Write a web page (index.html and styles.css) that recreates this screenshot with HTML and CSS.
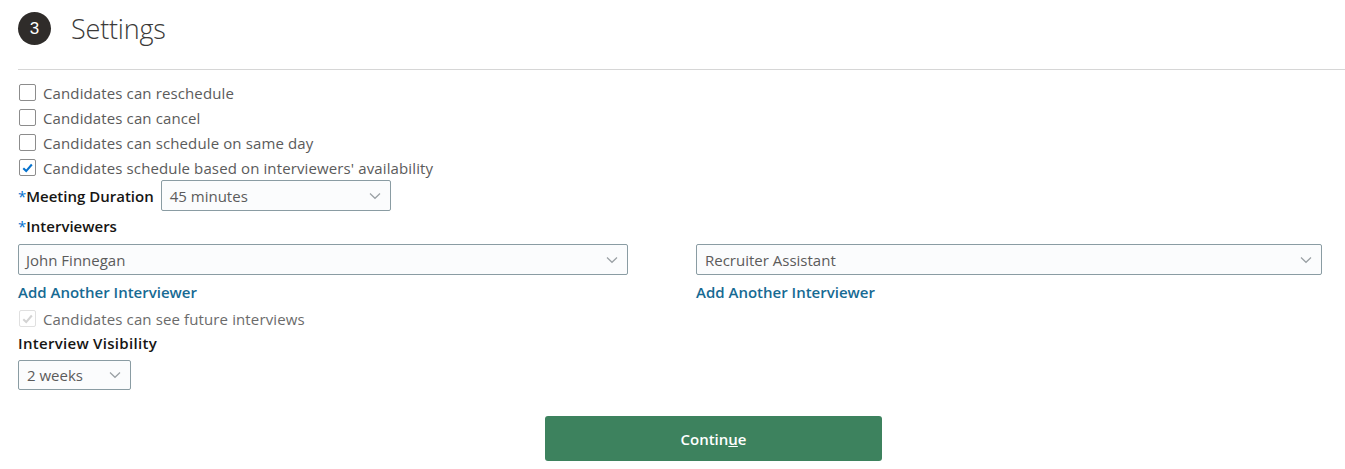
FILE: index.html
```html
<!DOCTYPE html>
<html>
<head>
<meta charset="utf-8">
<link rel="stylesheet" href="styles.css">
</head>
<body>
<div class="header">
  <span class="step">3</span>
  <h1 class="title">Settings</h1>
</div>
<div class="form">
  <div class="checks">
    <label class="check"><span class="box"></span><span class="check-text">Candidates can reschedule</span></label>
    <label class="check"><span class="box"></span><span class="check-text">Candidates can cancel</span></label>
    <label class="check"><span class="box"></span><span class="check-text">Candidates can schedule on same day</span></label>
    <label class="check"><span class="box checked"><svg viewBox="0 0 16 16" width="16" height="16"><path d="M3.5 8.3 L6.6 11.3 L12.6 4.3" fill="none" stroke="#0572ce" stroke-width="2.2"/></svg></span><span class="check-text">Candidates schedule based on interviewers' availability</span></label>
  </div>
  <div class="duration-row">
    <span class="label"><span class="req">*</span>Meeting Duration</span>
    <div class="select select-duration"><span>45 minutes</span><svg class="chev" viewBox="0 0 12 8" width="12" height="8"><path d="M1 1.5 L6 6.3 L11 1.5" fill="none" stroke="#9aa0a4" stroke-width="1.2"/></svg></div>
  </div>
  <div class="label block-label"><span class="req">*</span>Interviewers</div>
  <div class="interviewers">
    <div class="interviewer">
      <div class="select select-wide"><span>John Finnegan</span><svg class="chev" viewBox="0 0 12 8" width="12" height="8"><path d="M1 1.5 L6 6.3 L11 1.5" fill="none" stroke="#9aa0a4" stroke-width="1.2"/></svg></div>
      <a class="link">Add Another Interviewer</a>
    </div>
    <div class="interviewer">
      <div class="select select-wide"><span>Recruiter Assistant</span><svg class="chev" viewBox="0 0 12 8" width="12" height="8"><path d="M1 1.5 L6 6.3 L11 1.5" fill="none" stroke="#9aa0a4" stroke-width="1.2"/></svg></div>
      <a class="link">Add Another Interviewer</a>
    </div>
  </div>
  <label class="check disabled"><span class="box checked"><svg viewBox="0 0 16 16" width="16" height="16"><path d="M3.5 8.3 L6.6 11.3 L12.6 4.3" fill="none" stroke="#d3d3d3" stroke-width="2.2"/></svg></span><span class="check-text">Candidates can see future interviews</span></label>
  <div class="label block-label vis-label">Interview Visibility</div>
  <div class="select select-small"><span>2 weeks</span><svg class="chev" viewBox="0 0 12 8" width="12" height="8"><path d="M1 1.5 L6 6.3 L11 1.5" fill="none" stroke="#9aa0a4" stroke-width="1.2"/></svg></div>
  <div class="actions">
    <button class="continue">Contin<u>u</u>e</button>
  </div>
</div>
</body>
</html>
```

FILE: styles.css
```css
* { box-sizing: border-box; }
body {
  margin: 0;
  background: #fff;
  font-family: "Open Sans", "Noto Sans", sans-serif;
  color: #161513;
}
.header {
  display: flex;
  align-items: center;
  height: 70px;
  margin-left: 18px;
  padding-bottom: 12px;
  border-bottom: 1px solid #d6d6d6;
}
.step {
  width: 33px;
  height: 33px;
  border-radius: 50%;
  background: #2f2c2a;
  color: #fff;
  font-family: "Liberation Sans", sans-serif;
  font-size: 17px;
  display: flex;
  align-items: center;
  justify-content: center;
}
.title {
  margin: 0 0 0 20px;
  font-weight: 300;
  font-size: 27px;
  color: #3b3a39;
  letter-spacing: -0.2px;
}
.form {
  padding: 10px 0 0 18px;
}
.checks {
  display: flex;
  flex-direction: column;
}
.check {
  display: flex;
  align-items: center;
  height: 25px;
  font-size: 15px;
  color: #5b5b5b;
}
.check-text { letter-spacing: 0.12px; }
.box {
  width: 17px;
  height: 17px;
  border: 1px solid #8c8c8c;
  border-radius: 2px;
  background: #fff;
  margin: 0 7px 0 1px;
  display: flex;
  align-items: center;
  justify-content: center;
  flex: none;
}
.box svg { display: block; }
.check.disabled .box { border-color: #e0e0e0; }
.check.disabled .check-text { color: #6b6b6b; }
.duration-row {
  display: flex;
  align-items: center;
  height: 31px;
}
.label {
  font-size: 15px;
  font-weight: 600;
  color: #161513;
}
.req { color: #0572ce; font-weight: 400; }
.duration-row .label { margin-right: 7px; }
.select {
  display: flex;
  align-items: center;
  justify-content: space-between;
  height: 31px;
  border: 1px solid #8a9ca3;
  border-radius: 2px;
  background: #fbfcfd;
  padding: 0 9px 0 8px;
  font-size: 15px;
  color: #5b5b5b;
}
.select-duration { width: 230px; }
.select-wide { width: 610px; padding-left: 7px; }
.interviewers .interviewer:last-child .select-wide { width: 626px; padding-left: 8px; }
.select-small { width: 113px; height: 30px; }
.chev { flex: none; }
.block-label {
  height: 30px;
  display: flex;
  align-items: center;
}
.interviewers {
  display: flex;
  gap: 68px;
  margin-top: 3px;
}
.interviewer {
  display: flex;
  flex-direction: column;
}
.link {
  display: block;
  color: #176a93;
  font-size: 15px;
  font-weight: 600;
  margin-top: 7px;
  height: 20px;
  line-height: 20px;
}
.disabled { margin-top: 4px; }
.vis-label { height: 23px; margin-bottom: 6px; letter-spacing: 0.3px; }
.actions {
  display: flex;
  padding-left: 527px;
  margin-top: 26px;
}
.continue {
  width: 337px;
  height: 45px;
  border: none;
  border-radius: 3px;
  background: #3d825e;
  color: #fff;
  font-family: "Open Sans", "Noto Sans", sans-serif;
  font-weight: 600;
  font-size: 15px;
}
```
